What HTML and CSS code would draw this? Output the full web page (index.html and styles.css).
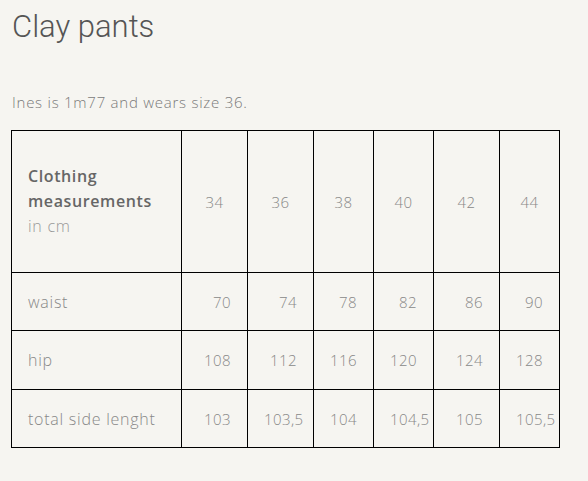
FILE: index.html
```html
<!DOCTYPE html>
<html lang="en">
<head>
<meta charset="utf-8">
<title>Clay pants</title>
<link rel="stylesheet" href="styles.css">
</head>
<body>
<main class="page">
  <h1 class="title">Clay pants</h1>
  <p class="intro">Ines is 1m77 and wears size 36.</p>
  <table class="sizes">
    <colgroup>
      <col class="c-label"><col class="c-wide"><col class="c-wide"><col class="c-narrow"><col class="c-narrow"><col class="c-wide"><col class="c-narrow">
    </colgroup>
    <tr class="head">
      <th class="label head-label"><span class="strong">Clothing<br>measurements</span><br><span class="unit">in cm</span></th>
      <th>34</th><th>36</th><th>38</th><th>40</th><th>42</th><th>44</th>
    </tr>
    <tr class="r1">
      <td class="label">waist</td>
      <td>70</td><td>74</td><td>78</td><td>82</td><td>86</td><td>90</td>
    </tr>
    <tr class="r2">
      <td class="label">hip</td>
      <td>108</td><td>112</td><td>116</td><td>120</td><td>124</td><td>128</td>
    </tr>
    <tr class="r3">
      <td class="label">total side lenght</td>
      <td>103</td><td>103,5</td><td>104</td><td>104,5</td><td>105</td><td>105,5</td>
    </tr>
  </table>
</main>
</body>
</html>
```
FILE: styles.css
```css
html, body {
  margin: 0;
  background: #f6f5f1;
}
.page {
  padding: 0 11px;
  font-family: "Open Sans", sans-serif;
  color: #888;
}
.title {
  margin: 0;
  padding: 9px 0 0 1px;
  font-family: Roboto, sans-serif;
  font-weight: 300;
  font-size: 31px;
  line-height: 36px;
  color: #555;
}
.intro {
  margin: 0;
  padding: 47px 0 0 1px;
  font-size: 15px;
  font-weight: 300;
  letter-spacing: 0.75px;
  line-height: 20px;
  color: #7a7a7a;
}
.sizes {
  margin-top: 18px;
  border-collapse: collapse;
  table-layout: fixed;
  width: 549px;
  font-size: 15px;
  font-weight: 300;
  letter-spacing: 0.4px;
  color: #888;
}
.c-label { width: 170px; }
.c-wide { width: 66px; }
.c-narrow { width: 60px; }
.sizes th, .sizes td {
  border: 1px solid #000;
  padding: 0 16px;
  font-weight: 300;
  white-space: nowrap;
}
.sizes th { text-align: center; }
.sizes td { text-align: right; }
.sizes .label {
  text-align: left;
  font-size: 16px;
  letter-spacing: 0.75px;
}
.head-label { line-height: 25px; }
.head { height: 142px; }
.r1 { height: 58px; }
.r2 { height: 59px; }
.r3 { height: 58px; }
.strong {
  font-weight: 600;
  color: #666;
  letter-spacing: 0.6px;
}
.unit { color: #999; }
```
